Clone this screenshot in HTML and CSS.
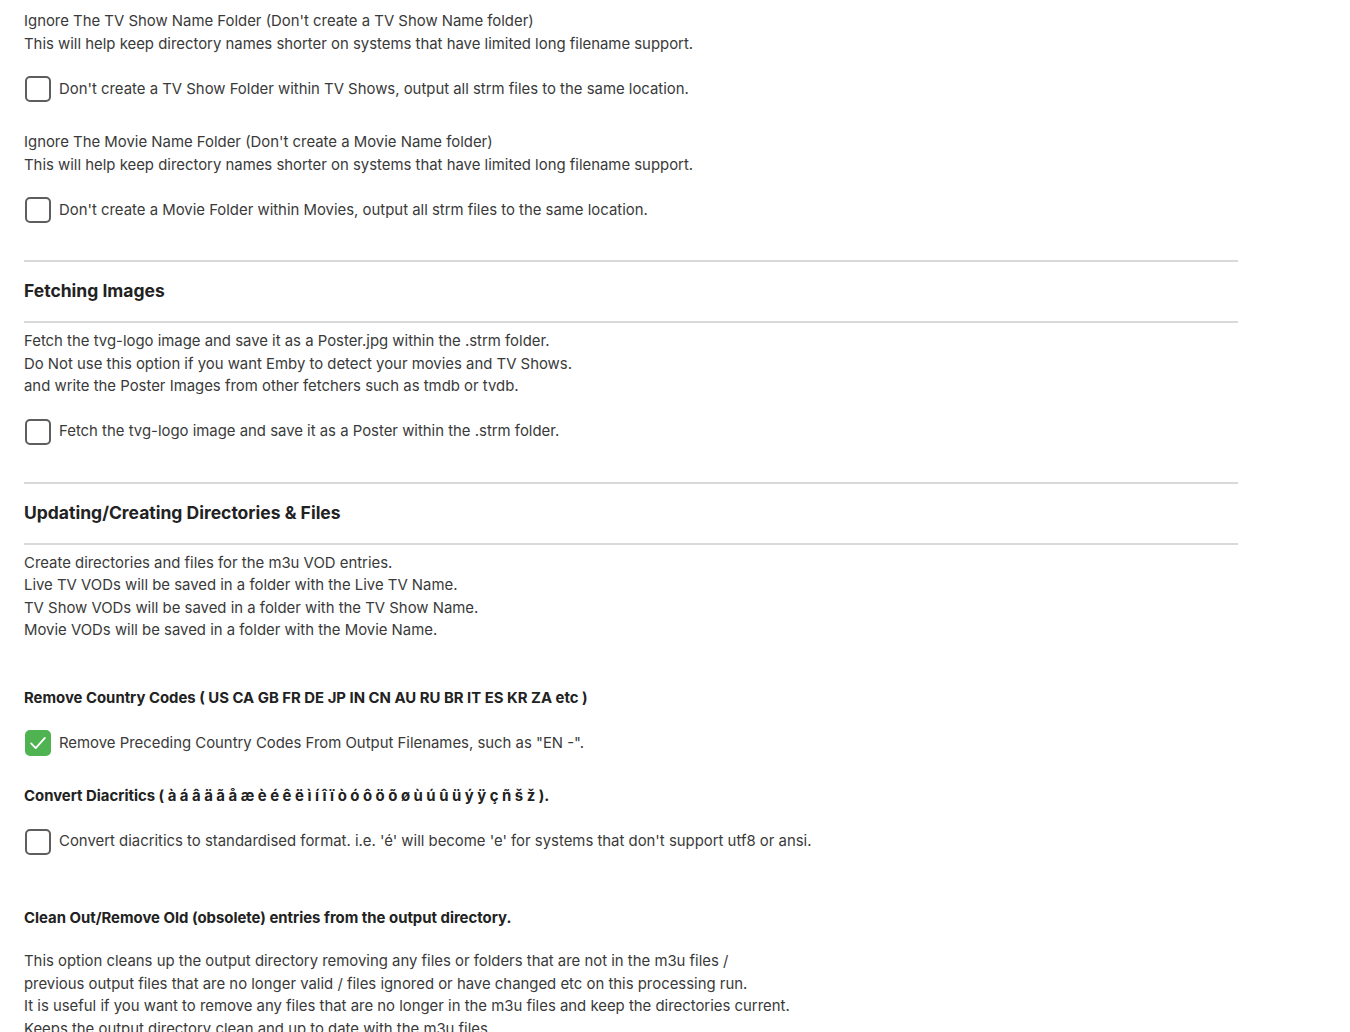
FILE: index.html
```html
<!DOCTYPE html>
<html lang="en">
<head>
  <meta charset="UTF-8">
  <meta name="viewport" content="width=device-width, initial-scale=1.0">
  <title>Output Settings</title>
  <link rel="stylesheet" href="styles.css">
</head>
<body>
  <div class="settings">
    <div class="option first">
      <p class="desc">Ignore The TV Show Name Folder (Don't create a TV Show Name folder)<br>
        This will help keep directory names shorter on systems that have limited long filename support.</p>
      <label class="check"><input type="checkbox"><span>Don't create a TV Show Folder within TV Shows, output all strm files to the same location.</span></label>
    </div>
    <div class="option">
      <p class="desc">Ignore The Movie Name Folder (Don't create a Movie Name folder)<br>
        This will help keep directory names shorter on systems that have limited long filename support.</p>
      <label class="check"><input type="checkbox"><span>Don't create a Movie Folder within Movies, output all strm files to the same location.</span></label>
    </div>

    <div class="section-title">Fetching Images</div>
    <div class="option tight">
      <p class="desc">Fetch the tvg-logo image and save it as a Poster.jpg within the .strm folder.<br>
        Do Not use this option if you want Emby to detect your movies and TV Shows.<br>
        and write the Poster Images from other fetchers such as tmdb or tvdb.</p>
      <label class="check"><input type="checkbox"><span>Fetch the tvg-logo image and save it as a Poster within the .strm folder.</span></label>
    </div>

    <div class="section-title">Updating/Creating Directories &amp; Files</div>
    <div class="option tight">
      <p class="desc">Create directories and files for the m3u VOD entries.<br>
        Live TV VODs will be saved in a folder with the Live TV Name.<br>
        TV Show VODs will be saved in a folder with the TV Show Name.<br>
        Movie VODs will be saved in a folder with the Movie Name.</p>
    </div>

    <div class="option spaced">
      <p class="label">Remove Country Codes ( US CA GB FR DE JP IN CN AU RU BR IT ES KR ZA etc )</p>
      <label class="check"><input type="checkbox" checked><span>Remove Preceding Country Codes From Output Filenames, such as "EN -".</span></label>
    </div>
    <div class="option">
      <p class="label">Convert Diacritics ( à á â ä ã å æ è é ê ë ì í î ï ò ó ô ö õ ø ù ú û ü ý ÿ ç ñ š ž ).</p>
      <label class="check"><input type="checkbox"><span>Convert diacritics to standardised format. i.e. 'é' will become 'e' for systems that don't support utf8 or ansi.</span></label>
    </div>

    <div class="option wide">
      <p class="label">Clean Out/Remove Old (obsolete) entries from the output directory.</p>
      <p class="desc">This option cleans up the output directory removing any files or folders that are not in the m3u files /<br>
        previous output files that are no longer valid / files ignored or have changed etc on this processing run.<br>
        It is useful if you want to remove any files that are no longer in the m3u files and keep the directories current.<br>
        Keeps the output directory clean and up to date with the m3u files.</p>
    </div>
  </div>
</body>
</html>
```

FILE: styles.css
```css
*{
  margin: 0;
  padding: 0;
  box-sizing: border-box;
}
html,body{
  background: #fff;
}
body{
  font-family: Inter, "Noto Sans", sans-serif;
  font-size: 14.9px;
  line-height: 22.5px;
  color: #3a3a3a;
  height: 1032px;
  overflow: hidden;
}
.settings{
  width: 1238px;
  padding: 10px 0 0 24px;
}
.option{
  padding-top: 29px;
}
.option.first{
  padding-top: 0;
}
.option.tight{
  padding-top: 7px;
}
.option.spaced{
  padding-top: 45px;
}
.option.wide{
  padding-top: 52px;
}
.desc{
  margin-bottom: 21px;
}
.label{
  font-weight: 700;
  color: #222;
  margin-bottom: 21px;
}
.option .desc:last-child{
  margin-bottom: 0;
}
.check{
  display: flex;
  align-items: center;
  gap: 8px;
  height: 26px;
  cursor: pointer;
}
.check input{
  -webkit-appearance: none;
  appearance: none;
  width: 26px;
  height: 26px;
  border: 2px solid #5e5e5e;
  border-radius: 5px;
  background: #fff;
  flex: none;
  margin: 0 0 0 1px;
}
.check input:checked{
  border-color: #4fb352;
  background: #4fb352 url("data:image/svg+xml;utf8,<svg xmlns='http://www.w3.org/2000/svg' viewBox='0 0 24 24'><path d='M4.5 12.5l5 5L19.5 6.5' fill='none' stroke='white' stroke-width='2' stroke-linecap='round' stroke-linejoin='round'/></svg>") no-repeat center/22px 22px;
}
.section-title{
  margin-top: 37px;
  border-top: 2px solid #d9d9d9;
  border-bottom: 2px solid #d9d9d9;
  padding: 17px 0 18px;
  font-size: 17.5px;
  line-height: 24px;
  font-weight: 700;
  color: #222;
}
```
